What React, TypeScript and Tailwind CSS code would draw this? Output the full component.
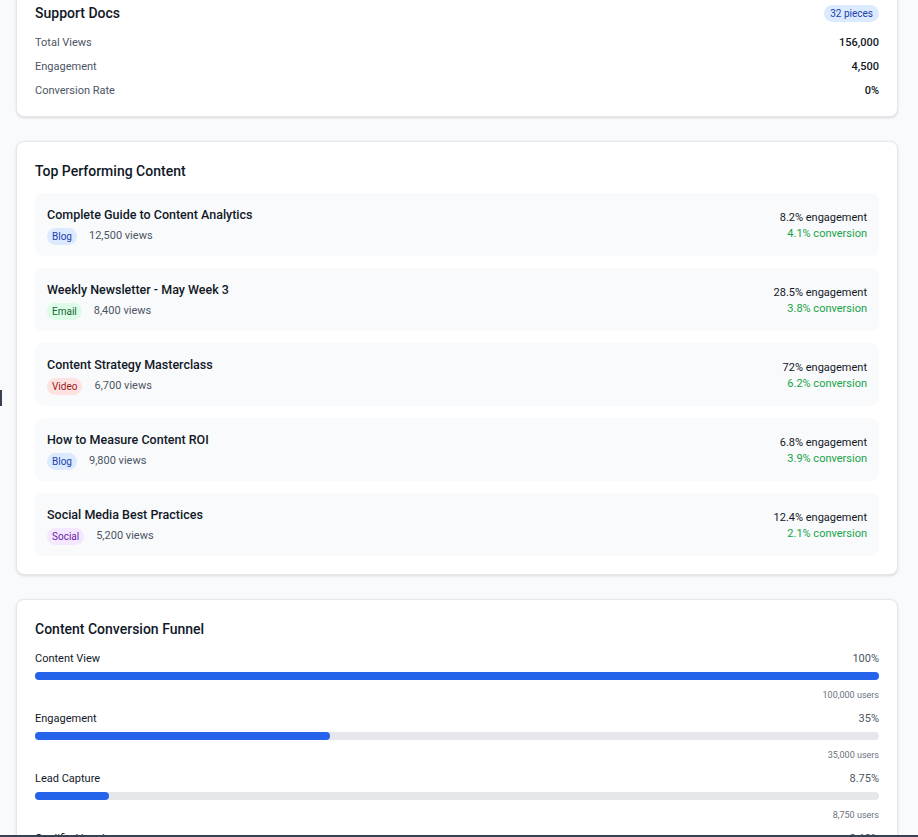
const stats = [
  { label: "Total Views", value: "156,000" },
  { label: "Engagement", value: "4,500" },
  { label: "Conversion Rate", value: "0%" },
];

const topContent = [
  { title: "Complete Guide to Content Analytics", type: "Blog", views: "12,500", engagement: "8.2%", conversion: "4.1%" },
  { title: "Weekly Newsletter - May Week 3", type: "Email", views: "8,400", engagement: "28.5%", conversion: "3.8%" },
  { title: "Content Strategy Masterclass", type: "Video", views: "6,700", engagement: "72%", conversion: "6.2%" },
  { title: "How to Measure Content ROI", type: "Blog", views: "9,800", engagement: "6.8%", conversion: "3.9%" },
  { title: "Social Media Best Practices", type: "Social", views: "5,200", engagement: "12.4%", conversion: "2.1%" },
];

const badgeColors: Record<string, string> = {
  Blog: "bg-[#dbeafe] text-[#1e40af]",
  Email: "bg-[#dcfce7] text-[#166534]",
  Video: "bg-[#fee2e2] text-[#991b1b]",
  Social: "bg-[#f3e8ff] text-[#6b21a8]",
};

const funnel = [
  { stage: "Content View", pct: 100, label: "100%", users: "100,000" },
  { stage: "Engagement", pct: 35, label: "35%", users: "35,000" },
  { stage: "Lead Capture", pct: 8.75, label: "8.75%", users: "8,750" },
  { stage: "Qualified Leads", pct: 2.63, label: "2.63%", users: "2,630" },
];

export default function App() {
  return (
    <div
      className="min-h-screen overflow-hidden bg-[#f9fafb] pl-4 pr-5 text-[#111827]"
      style={{ fontFamily: 'Roboto, "Noto Sans", sans-serif' }}
    >
      {/* Support Docs card (scrolled, top is off screen) */}
      <div className="-mt-[17px] rounded-lg border border-[#e5e7eb] bg-white px-[18px] pt-[19px] pb-[17px] shadow-sm">
        <div className="mb-3 flex items-center justify-between">
          <h3 className="text-[14px] leading-5 font-medium">Support Docs</h3>
          <span className="rounded-full bg-[#dbeafe] px-1.5 text-[10px] leading-[17px] text-[#1e40af]">
            32 pieces
          </span>
        </div>
        <div className="flex flex-col gap-2">
          {stats.map((s) => (
            <div key={s.label} className="flex justify-between text-[11px] leading-4">
              <span className="text-[#4b5563]">{s.label}</span>
              <span className="font-medium">{s.value}</span>
            </div>
          ))}
        </div>
      </div>

      {/* Top Performing Content */}
      <div className="mt-6 rounded-lg border border-[#e5e7eb] bg-white px-[18px] pt-[19px] pb-[18px] shadow-sm">
        <h3 className="mb-3 text-[14px] leading-5 font-medium">Top Performing Content</h3>
        <div className="flex flex-col gap-3">
          {topContent.map((c) => (
            <div
              key={c.title}
              className="flex items-center justify-between rounded-lg bg-[#f9fafb] px-3 pt-[13px] pb-[11px]"
            >
              <div>
                <div className="text-[12.5px] leading-[18px] font-medium">{c.title}</div>
                <div className="mt-1 flex items-center gap-3">
                  <span className={`rounded-full px-[5px] text-[10px] leading-[17px] ${badgeColors[c.type]}`}>
                    {c.type}
                  </span>
                  <span className="text-[11px] text-[#4b5563]">{c.views} views</span>
                </div>
              </div>
              <div className="text-right text-[11px] leading-4">
                <div>{c.engagement} engagement</div>
                <div className="text-[#16a34a]">{c.conversion} conversion</div>
              </div>
            </div>
          ))}
        </div>
      </div>

      {/* Content Conversion Funnel */}
      <div className="mt-6 rounded-lg border border-[#e5e7eb] bg-white px-[18px] pt-[19px] pb-[18px] shadow-sm">
        <h3 className="mb-3 text-[14px] leading-5 font-medium">Content Conversion Funnel</h3>
        <div className="flex flex-col gap-[10px]">
          {funnel.map((f) => (
            <div key={f.stage}>
              <div className="flex justify-between text-[11px] leading-4">
                <span>{f.stage}</span>
                <span className="text-[#4b5563]">{f.label}</span>
              </div>
              <div className="mt-[5px] h-2 w-full rounded-full bg-[#e5e7eb]">
                <div className="h-2 rounded-full bg-[#2563eb]" style={{ width: `${f.pct}%` }} />
              </div>
              <div className="mt-[9px] text-right text-[9px] leading-3 text-[#6b7280]">{f.users} users</div>
            </div>
          ))}
        </div>
      </div>

      <div className="fixed top-[390px] left-0 h-[16px] w-[2px] bg-[#374151]" />
      <div className="fixed bottom-0 left-0 h-[2px] w-full bg-[#374151]" />
    </div>
  );
}
